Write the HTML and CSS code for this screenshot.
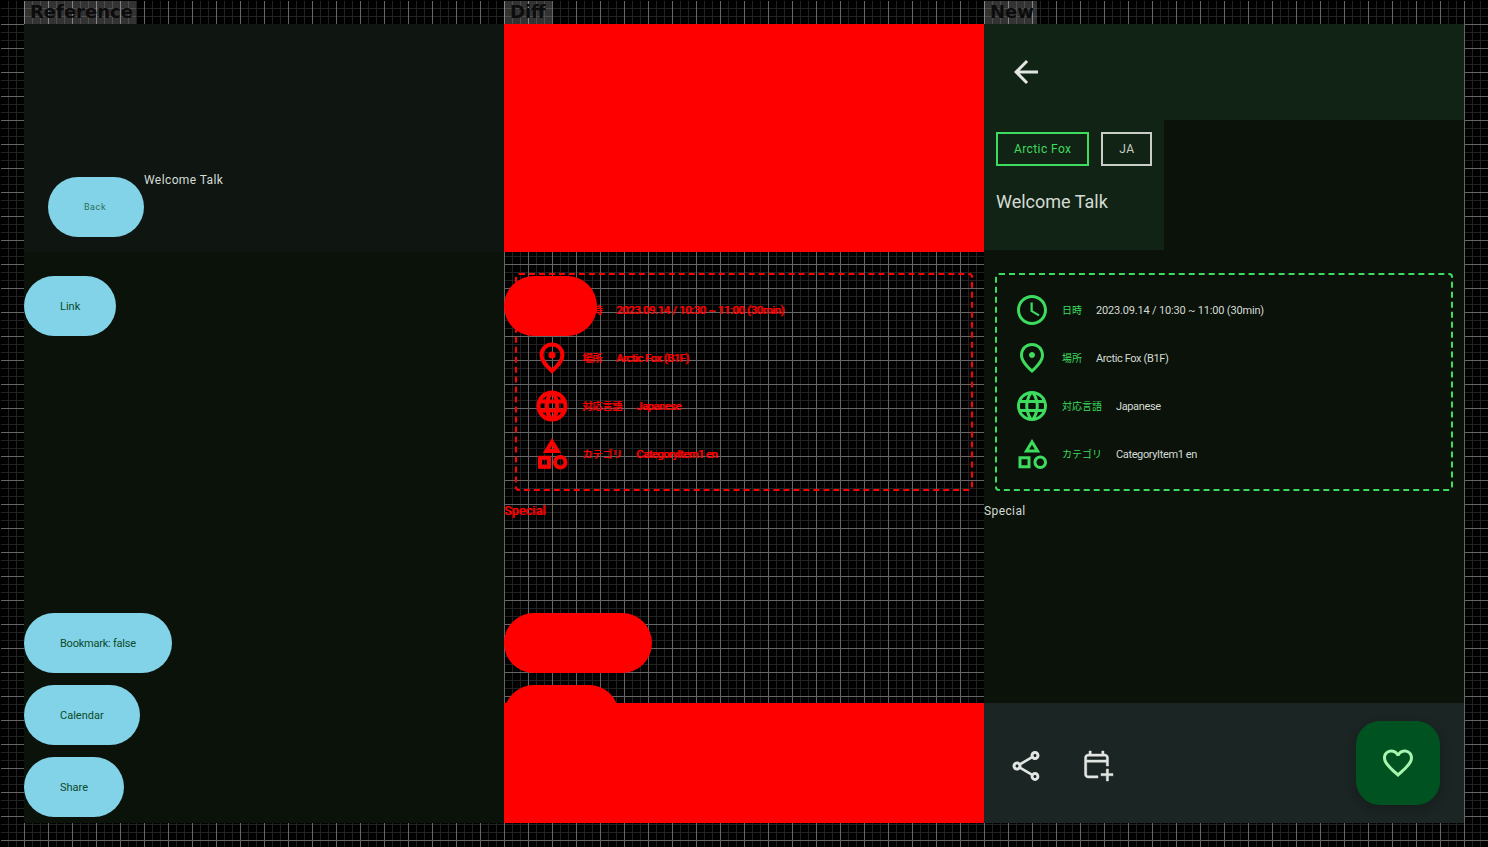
FILE: index.html
```html
<!DOCTYPE html>
<html lang="ja">
<head>
<meta charset="utf-8">
<title>Welcome Talk</title>
<link rel="stylesheet" href="styles.css">
</head>
<body>
<svg class="sprite" xmlns="http://www.w3.org/2000/svg">
  <symbol id="i-back" viewBox="0 0 24 24"><path d="M20 11H7.83l5.59-5.59L12 4l-8 8 8 8 1.41-1.41L7.83 13H20v-2z"/></symbol>
  <symbol id="i-clock" viewBox="0 0 24 24"><path d="M11.99 2C6.47 2 2 6.48 2 12s4.47 10 9.99 10C17.52 22 22 17.52 22 12S17.52 2 11.99 2zM12 20c-4.42 0-8-3.58-8-8s3.58-8 8-8 8 3.58 8 8-3.58 8-8 8zm.5-13H11v6l5.25 3.15.75-1.23-4.5-2.67z"/></symbol>
  <symbol id="i-place" viewBox="0 0 24 24"><path d="M12 12c-1.1 0-2-.9-2-2s.9-2 2-2 2 .9 2 2-.9 2-2 2zm6-1.8C18 6.57 15.35 4 12 4s-6 2.57-6 6.2c0 2.34 1.95 5.44 6 9.14 4.05-3.7 6-6.8 6-9.14zM12 2c4.2 0 8 3.22 8 8.2 0 3.32-2.67 7.25-8 11.8-5.33-4.55-8-8.48-8-11.8C4 5.22 7.8 2 12 2z"/></symbol>
  <symbol id="i-globe" viewBox="0 0 24 24"><path d="M11.99 2C6.47 2 2 6.48 2 12s4.47 10 9.99 10C17.52 22 22 17.52 22 12S17.52 2 11.99 2zm6.93 6h-2.95c-.32-1.25-.78-2.45-1.38-3.56 1.84.63 3.37 1.91 4.33 3.56zM12 4.04c.83 1.2 1.48 2.53 1.91 3.96h-3.82c.43-1.43 1.08-2.76 1.91-3.96zM4.26 14C4.1 13.36 4 12.69 4 12s.1-1.36.26-2h3.38c-.08.66-.14 1.32-.14 2s.06 1.34.14 2H4.26zm.82 2h2.95c.32 1.25.78 2.45 1.38 3.56-1.84-.63-3.37-1.9-4.33-3.56zm2.95-8H5.08c.96-1.66 2.49-2.93 4.33-3.56C8.81 5.55 8.35 6.75 8.03 8zM12 19.96c-.83-1.2-1.48-2.53-1.91-3.96h3.82c-.43 1.43-1.08 2.76-1.91 3.96zM14.34 14H9.66c-.09-.66-.16-1.32-.16-2s.07-1.35.16-2h4.68c.09.65.16 1.32.16 2s-.07 1.34-.16 2zm.25 5.56c.6-1.11 1.06-2.31 1.38-3.56h2.95c-.96 1.65-2.49 2.93-4.33 3.56zM16.36 14c.08-.66.14-1.32.14-2s-.06-1.34-.14-2h3.38c.16.64.26 1.31.26 2s-.1 1.36-.26 2h-3.38z"/></symbol>
  <symbol id="i-category" viewBox="0 0 24 24"><path d="m12 2-5.5 9h11L12 2zm0 3.84L13.93 9h-3.87L12 5.84zM17.5 13c-2.49 0-4.5 2.01-4.5 4.5s2.01 4.5 4.5 4.5 4.5-2.01 4.5-4.5-2.01-4.5-4.5-4.5zm0 7c-1.38 0-2.5-1.12-2.5-2.5s1.12-2.5 2.5-2.5 2.5 1.12 2.5 2.5-1.12 2.5-2.5 2.5zM3 21.5h8v-8H3v8zm2-6h4v4H5v-4z"/></symbol>
  <symbol id="i-share" viewBox="0 0 24 24"><path d="M18 16.08c-.76 0-1.44.3-1.96.77L8.91 12.7c.05-.23.09-.46.09-.7s-.04-.47-.09-.7l7.05-4.11c.54.5 1.25.81 2.04.81 1.66 0 3-1.34 3-3s-1.34-3-3-3-3 1.34-3 3c0 .24.04.47.09.7L8.04 9.81C7.5 9.31 6.79 9 6 9c-1.66 0-3 1.34-3 3s1.34 3 3 3c.79 0 1.5-.31 2.04-.81l7.12 4.16c-.05.21-.08.43-.08.65 0 1.61 1.31 2.92 2.92 2.92 1.61 0 2.92-1.31 2.92-2.92s-1.31-2.92-2.92-2.92zM18 4c.55 0 1 .45 1 1s-.45 1-1 1-1-.45-1-1 .45-1 1-1zM6 13c-.55 0-1-.45-1-1s.45-1 1-1 1 .45 1 1-.45 1-1 1zm12 7.02c-.55 0-1-.45-1-1s.45-1 1-1 1 .45 1 1-.45 1-1 1z"/></symbol>
  <symbol id="i-calendar" viewBox="0 0 24 24"><path fill-rule="evenodd" d="M16.5 4H16V2h-1.5v2h-7V2H6v2h-.5C4.1 4 3 5.1 3 6.5v11C3 18.9 4.1 20 5.5 20H12v-1.5H5.5c-.6 0-1-.4-1-1v-8h13V12H19V6.500C19 5.100 17.900 4 16.500 4zM4.500 8V6.500c0-.6.4-1 1-1h11c.6 0 1 .4 1 1V8h-13zM17.500 14v3H14v1.500h3.500V22H19v-3.500h3V17h-3v-3z"/></symbol>
  <symbol id="i-heart" viewBox="0 0 24 24"><path d="M16.5 3c-1.74 0-3.41.81-4.5 2.09C10.91 3.81 9.24 3 7.5 3 4.42 3 2 5.42 2 8.5c0 3.78 3.4 6.86 8.55 11.54L12 21.35l1.45-1.32C18.6 15.36 22 12.28 22 8.5 22 5.42 19.58 3 16.5 3zm-4.4 15.55l-.1.1-.1-.1C7.14 14.24 4 11.39 4 8.5 4 6.5 5.5 5 7.5 5c1.54 0 3.04.99 3.57 2.36h1.87C13.46 5.99 14.96 5 16.5 5c2 0 3.5 1.5 3.5 3.5 0 2.89-3.14 5.74-7.9 10.05z"/></symbol>
</svg>

<main class="board">
  <section class="col">
    <h2 class="tag">Reference</h2>
    <div class="pane">
      <header class="ref-head">
        <button class="pill pill-back">Back</button>
        <h1 class="ref-title">Welcome Talk</h1>
      </header>
      <div class="ref-body">
        <button class="pill">Link</button>
        <div class="stack">
          <button class="pill pill-tight">Bookmark: false</button>
          <button class="pill">Calendar</button>
          <button class="pill">Share</button>
        </div>
      </div>
    </div>
  </section>

  <section class="col">
    <h2 class="tag tag-diff">Diff</h2>
    <div class="pane diff">
      <div class="diff-head"></div>
      <div class="info">
        <div class="row"><svg class="icon"><use href="#i-clock"/></svg><span class="key">日時</span><span class="val">2023.09.14 / 10:30 ~ 11:00 (30min)</span></div>
        <div class="row"><svg class="icon"><use href="#i-place"/></svg><span class="key">場所</span><span class="val val-tight">Arctic Fox (B1F)</span></div>
        <div class="row"><svg class="icon"><use href="#i-globe"/></svg><span class="key">対応言語</span><span class="val val-tight">Japanese</span></div>
        <div class="row"><svg class="icon"><use href="#i-category"/></svg><span class="key">カテゴリ</span><span class="val val-tight">CategoryItem1 en</span></div>
      </div>
      <p class="special">Special</p>
      <div class="diff-bar"></div>
      <div class="diff-pills">
        <div class="blob blob-link"></div>
        <div class="stack">
          <div class="blob blob-bookmark"></div>
          <div class="blob blob-calendar"></div>
        </div>
      </div>
    </div>
  </section>

  <section class="col">
    <h2 class="tag">New</h2>
    <div class="pane">
      <div class="app-top"><svg class="icon icon-light"><use href="#i-back"/></svg></div>
      <div class="app-title">
        <div class="chips">
          <span class="chip chip-green">Arctic Fox</span>
          <span class="chip">JA</span>
        </div>
        <h1 class="title">Welcome Talk</h1>
      </div>
      <div class="info">
        <div class="row"><svg class="icon"><use href="#i-clock"/></svg><span class="key">日時</span><span class="val">2023.09.14 / 10:30 ~ 11:00 (30min)</span></div>
        <div class="row"><svg class="icon"><use href="#i-place"/></svg><span class="key">場所</span><span class="val val-tight">Arctic Fox (B1F)</span></div>
        <div class="row"><svg class="icon"><use href="#i-globe"/></svg><span class="key">対応言語</span><span class="val val-tight">Japanese</span></div>
        <div class="row"><svg class="icon"><use href="#i-category"/></svg><span class="key">カテゴリ</span><span class="val val-tight">CategoryItem1 en</span></div>
      </div>
      <p class="special">Special</p>
      <footer class="bar">
        <svg class="icon icon-light"><use href="#i-share"/></svg>
        <svg class="icon icon-light icon-bold"><use href="#i-calendar"/></svg>
        <button class="fab" aria-label="Bookmark"><svg class="icon icon-heart"><use href="#i-heart"/></svg></button>
      </footer>
    </div>
  </section>
</main>
</body>
</html>
```

FILE: styles.css
```css
* { box-sizing: border-box; }

html { height: 847px; overflow: hidden; background: #000; }

/* The 1px margin leaves the sheet's first row and column free of grid lines:
   each line sits on the last pixel of its tile, at 8, 16, 24... */
body {
  height: 846px;
  margin: 1px 0 0 1px;
  background-image:
    linear-gradient(to left, #666 1px, transparent 1px),
    linear-gradient(to top, #666 1px, transparent 1px),
    linear-gradient(to left, #222 1px, transparent 1px),
    linear-gradient(to top, #222 1px, transparent 1px);
  background-size: 24px 24px, 24px 24px, 8px 8px, 8px 8px;
  font-family: Roboto, "Noto Sans CJK JP", sans-serif;
}

.sprite { position: absolute; width: 0; height: 0; }

.board {
  display: grid;
  grid-template-columns: repeat(3, 480px);
  padding: 23px 0 0 23px;
}

.col { display: flex; flex-direction: column; align-items: flex-start; }

.tag {
  height: 24px;
  margin: -24px 0 0;
  padding: 0 3px 0 6px;
  background: rgba(255, 255, 255, .2);
  color: #0c0c0c;
  font: bold 18px/24px "DejaVu Sans", sans-serif;
}

.tag-diff { width: 48px; }

.pane {
  position: relative;
  display: flex;
  flex-direction: column;
  width: 480px;
  height: 799px;
  background: #0a120a;
}

/* Reference */
.ref-head {
  display: flex;
  align-items: flex-start;
  height: 228px;
  padding: 148px 0 0 24px;
  background: #0f1511;
}

.ref-title {
  margin: 0;
  color: #d5dbd5;
  font-size: 12px;
  font-weight: 400;
  line-height: 16px;
  letter-spacing: .4px;
}

.ref-body {
  display: flex;
  flex: 1;
  flex-direction: column;
  align-items: flex-start;
  padding: 24px 0 6px;
}

.stack {
  display: flex;
  flex-direction: column;
  align-items: flex-start;
  gap: 12px;
  margin-top: auto;
}

.pill {
  height: 60px;
  padding: 2px 36px 0;
  border: 0;
  border-radius: 30px;
  background: #82d3e8;
  color: #0b4a2a;
  font: 400 11px/16px Roboto, sans-serif;
}

.pill-tight { letter-spacing: -.23px; }

.pill-back {
  width: 96px;
  margin-top: 5px;
  padding: 0 2px 0 0;
  color: #2a7059;
  font-size: 9px;
  letter-spacing: .6px;
}

/* Shared info card */
.info {
  height: 218px;
  margin: 23px 11px 0;
  padding: 11px 17px;
  border: 2px dashed #3ddc5f;
  border-radius: 4px;
}

.row { display: flex; align-items: center; height: 48px; }

.icon { width: 36px; height: 36px; flex: none; fill: #3ddc5f; }
.icon-light { fill: #e2e6e2; }
.icon-bold { stroke: #e2e6e2; stroke-width: .3px; }
.icon-heart { fill: #a8f5b0; }

.key {
  margin-left: 12px;
  margin-right: 14px;
  color: #3ddc5f;
  font: 400 10px/16px "Noto Sans CJK JP", sans-serif;
}

.val {
  padding-top: 2px;
  color: #d5dbd5;
  font-size: 11px;
  line-height: 16px;
  letter-spacing: -.18px;
}

.val-tight { letter-spacing: -.37px; }

.special {
  margin: 12px 0 0;
  color: #d5dbd5;
  font-size: 12px;
  line-height: 16px;
  letter-spacing: .4px;
}

/* New */
.app-top {
  width: 100%;
  height: 96px;
  padding: 30px 0 0 24px;
  background: #112314;
}

.app-title {
  width: 180px;
  height: 130px;
  padding: 12px;
  background: #112314;
}

.chips { display: flex; gap: 12px; }

.chip {
  flex: none;
  height: 34px;
  padding: 0 16px;
  border: 2px solid #c8cdc8;
  color: #c8cdc8;
  font-size: 12px;
  line-height: 30px;
  letter-spacing: .4px;
  white-space: nowrap;
}

.chip-green { border-color: #3ddc5f; color: #3ddc5f; }

.title {
  margin: 24px 0 0;
  color: #d5dbd5;
  font-size: 18px;
  font-weight: 400;
  line-height: 24px;
}

.bar {
  display: flex;
  align-items: flex-start;
  gap: 36px;
  height: 120px;
  margin-top: auto;
  padding-left: 24px;
  background: #1b2523;
}

.bar > .icon { margin-top: 45px; }

.fab {
  display: flex;
  align-items: center;
  justify-content: center;
  width: 84px;
  height: 84px;
  margin: 18px 24px 0 auto;
  padding: 0;
  border: 0;
  border-radius: 24px;
  background: #005321;
  box-shadow: 0 4px 8px 3px rgba(0, 0, 0, .15);
}

/* Diff */
.diff { background: transparent; }

.diff .info { margin-top: 21px; border-color: #f00; }
.diff .icon { fill: #f00; stroke: #f00; stroke-width: .7px; }
.diff .key, .diff .val, .diff .special { color: #f00; text-shadow: 1px 0 #f00; }

.diff-head { height: 228px; background: #f00; }
.diff-bar { height: 120px; margin-top: auto; background: #f00; }

.diff-pills {
  position: absolute;
  inset: 228px 0 78px;
  display: flex;
  flex-direction: column;
  align-items: flex-start;
  padding-top: 24px;
}

.blob { height: 60px; border-radius: 30px; background: #f00; }
.blob-link { width: 93px; }
.blob-bookmark { width: 148px; }
.blob-calendar { width: 115px; }
```
